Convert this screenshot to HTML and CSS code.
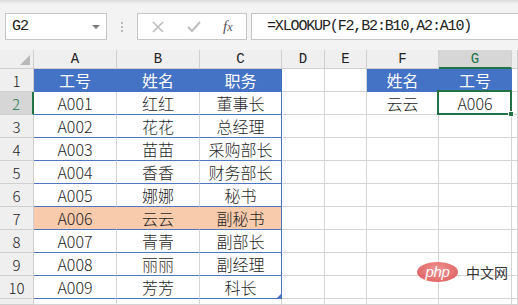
FILE: index.html
```html
<!DOCTYPE html>
<html lang="zh">
<head>
<meta charset="utf-8">
<title>XLOOKUP</title>
<link rel="stylesheet" href="styles.css">
</head>
<body>
<div class="app">
  <div class="toolbar">
    <div class="namebox"><span class="namebox-text">G2</span><span class="caret"></span></div>
    <div class="dots"><i></i><i></i><i></i></div>
    <div class="fnbox">
      <svg class="ico" width="14" height="14" viewBox="0 0 14 14"><path d="M2 2 L12 12 M12 2 L2 12" stroke="#bdbdbd" stroke-width="1.6" fill="none"/></svg>
      <svg class="ico" width="16" height="14" viewBox="0 0 16 14"><path d="M2 7 L6 11 L14 2" stroke="#bdbdbd" stroke-width="2" fill="none"/></svg>
      <span class="fx"><span class="fx-f">f</span><span class="fx-x">x</span></span>
    </div>
    <div class="formula">=XLOOKUP(F2,B2:B10,A2:A10)</div>
  </div>
  <div class="sheet">
    <div class="ch corner"><span class="tri"></span></div>
    <div class="ch">A</div><div class="ch">B</div><div class="ch">C</div><div class="ch">D</div><div class="ch">E</div><div class="ch">F</div><div class="ch ch-sel">G</div><div class="ch"></div>

    <div class="rh">1</div>
    <div class="c th">工号</div><div class="c th">姓名</div><div class="c th">职务</div><div class="c"></div><div class="c"></div><div class="c th th2">姓名</div><div class="c th th2">工号</div><div class="c"></div>

    <div class="rh rh-sel">2</div>
    <div class="c td">A001</div><div class="c td">红红</div><div class="c td tr">董事长</div><div class="c"></div><div class="c"></div><div class="c">云云</div><div class="c sel-cell">A006<span class="sel"><span class="handle"></span></span></div><div class="c"></div>

    <div class="rh">3</div>
    <div class="c td">A002</div><div class="c td">花花</div><div class="c td tr">总经理</div><div class="c"></div><div class="c"></div><div class="c"></div><div class="c"></div><div class="c"></div>

    <div class="rh">4</div>
    <div class="c td">A003</div><div class="c td">苗苗</div><div class="c td tr">采购部长</div><div class="c"></div><div class="c"></div><div class="c"></div><div class="c"></div><div class="c"></div>

    <div class="rh">5</div>
    <div class="c td">A004</div><div class="c td">香香</div><div class="c td tr">财务部长</div><div class="c"></div><div class="c"></div><div class="c"></div><div class="c"></div><div class="c"></div>

    <div class="rh">6</div>
    <div class="c td">A005</div><div class="c td">娜娜</div><div class="c td tr">秘书</div><div class="c"></div><div class="c"></div><div class="c"></div><div class="c"></div><div class="c"></div>

    <div class="rh">7</div>
    <div class="c td hl">A006</div><div class="c td hl">云云</div><div class="c td tr hl">副秘书</div><div class="c"></div><div class="c"></div><div class="c"></div><div class="c"></div><div class="c"></div>

    <div class="rh">8</div>
    <div class="c td">A007</div><div class="c td">青青</div><div class="c td tr">副部长</div><div class="c"></div><div class="c"></div><div class="c"></div><div class="c"></div><div class="c"></div>

    <div class="rh">9</div>
    <div class="c td">A008</div><div class="c td">丽丽</div><div class="c td tr">副经理</div><div class="c"></div><div class="c"></div><div class="c"></div><div class="c"></div><div class="c"></div>

    <div class="rh">10</div>
    <div class="c td">A009</div><div class="c td">芳芳</div><div class="c td tr">科长<span class="resize"></span></div><div class="c"></div><div class="c"></div><div class="c"></div><div class="c"></div><div class="c"></div>

    <div class="rh"></div>
    <div class="c"></div><div class="c"></div><div class="c"></div><div class="c"></div><div class="c"></div><div class="c"></div><div class="c"></div><div class="c"></div>
  </div>
  <div class="watermark"><span class="php">php</span><span class="cn">中文网</span></div>
</div>
</body>
</html>
```
FILE: styles.css
```css
* { box-sizing: border-box; }
html, body { margin: 0; padding: 0; }
body {
  width: 518px;
  height: 305px;
  overflow: hidden;
  background: #f3f3f3;
  font-family: "Noto Sans CJK SC", "Noto Sans", sans-serif;
}
.app { position: relative; width: 518px; height: 305px; }

.toolbar {
  height: 50px;
  display: flex;
  align-items: flex-start;
  padding: 13px 0 0 5px;
  background: linear-gradient(#dcdcdc 0, #e6e6e6 2px, #f3f3f3 4px);
}
.namebox {
  width: 102px;
  height: 27px;
  background: #fff;
  border: 1px solid #c6c6c6;
  display: flex;
  align-items: center;
  justify-content: space-between;
  padding: 0 6px 0 6px;
}
.namebox-text {
  font-family: "Liberation Mono", monospace;
  font-size: 15px;
  color: #222;
  letter-spacing: -1px;
}
.caret {
  width: 0; height: 0;
  border-left: 4px solid transparent;
  border-right: 4px solid transparent;
  border-top: 4px solid #7a7a7a;
}
.dots {
  width: 30px;
  height: 27px;
  display: flex;
  flex-direction: column;
  align-items: center;
  justify-content: center;
  gap: 2px;
}
.dots i { display: block; width: 2px; height: 2px; background: #b9b9b9; }
.fnbox {
  width: 110px;
  height: 27px;
  background: #fff;
  border: 1px solid #c6c6c6;
  display: flex;
  align-items: center;
  padding: 0 0 0 13px;
}
.fnbox .ico:nth-child(1) { margin-right: 21px; }
.fnbox .ico:nth-child(2) { margin-right: 21px; }
.fx {
  font-family: "Liberation Serif", serif;
  font-style: italic;
  color: #555;
  font-size: 15px;
  line-height: 1;
}
.fx-x { font-size: 12px; }
.formula {
  flex: 1;
  height: 27px;
  margin-left: 4px;
  background: #fff;
  border: 1px solid #c6c6c6;
  border-right: none;
  font-family: "Liberation Mono", monospace;
  font-size: 15px;
  letter-spacing: -1.15px;
  line-height: 25px;
  padding-left: 15px;
  color: #222;
}

.sheet {
  display: grid;
  grid-template-columns: 34px 83px 83px 82px 43px 42px 72px 73px 1fr;
  grid-template-rows: 19px repeat(10, 23px) 1fr;
  height: 255px;
  background: #fff;
}
.ch {
  background: #efefef;
  border-right: 1px solid #cfcfcf;
  border-bottom: 1px solid #cfcfcf;
  font-family: "Liberation Mono", monospace;
  font-size: 14px;
  color: #222;
  text-align: center;
  line-height: 18px;
}
.ch.corner { position: relative; }
.tri {
  position: absolute;
  right: 3px;
  bottom: 3px;
  width: 0; height: 0;
  border-left: 10px solid transparent;
  border-bottom: 10px solid #b8b8b8;
}
.ch-sel {
  background: #d6d6d6;
  color: #217346;
  border-bottom: 2px solid #217346;
}
.rh {
  background: #efefef;
  border-right: 1px solid #cfcfcf;
  border-bottom: 1px solid #cfcfcf;
  font-size: 15px;
  font-weight: 300;
  color: #222;
  text-align: center;
  line-height: 24px;
}
.rh-sel {
  background: #d6d6d6;
  color: #217346;
  border-right: 2px solid #217346;
}
.c {
  border-right: 1px solid #d4d4d4;
  border-bottom: 1px solid #d4d4d4;
  font-size: 16px;
  font-weight: 300;
  color: #1f1f1f;
  text-align: center;
  line-height: 22px;
  white-space: nowrap;
}
.th {
  background: #4472c4;
  color: #fff;
  font-weight: 400;
  border-right-color: #4472c4;
  border-bottom-color: #4472c4;
}
.td { border-bottom-color: #4f76c0; }
.tr { border-right-color: #4f76c0; position: relative; }
.hl { background: #f8cbad; border-right-color: #f8cbad; }
.tr.hl { border-right-color: #4f76c0; }
.resize {
  position: absolute;
  right: 0;
  bottom: 0;
  width: 0; height: 0;
  border-left: 4px solid transparent;
  border-bottom: 4px solid #4472c4;
}
.sel-cell { position: relative; }
.sel {
  position: absolute;
  left: -2px; top: -2px; right: -1px; bottom: -1px;
  border: 2px solid #217346;
}
.handle {
  position: absolute;
  right: -4px;
  bottom: -4px;
  width: 6px;
  height: 6px;
  background: #217346;
  border: 1px solid #fff;
}

.watermark {
  position: absolute;
  left: 417px;
  top: 262px;
  display: flex;
  align-items: center;
  gap: 8px;
}
.php {
  width: 41px;
  height: 20px;
  border-radius: 50%;
  background: radial-gradient(ellipse at 50% 40%, #f08a8a 0, #e05a5a 70%);
  color: #fff;
  font-family: "Liberation Sans", sans-serif;
  font-style: italic;
  font-size: 15px;
  line-height: 19px;
  text-align: center;
  letter-spacing: -0.3px;
  opacity: 0.9;
}
.cn {
  font-size: 14px;
  color: #333;
  letter-spacing: 0px;
}
```
